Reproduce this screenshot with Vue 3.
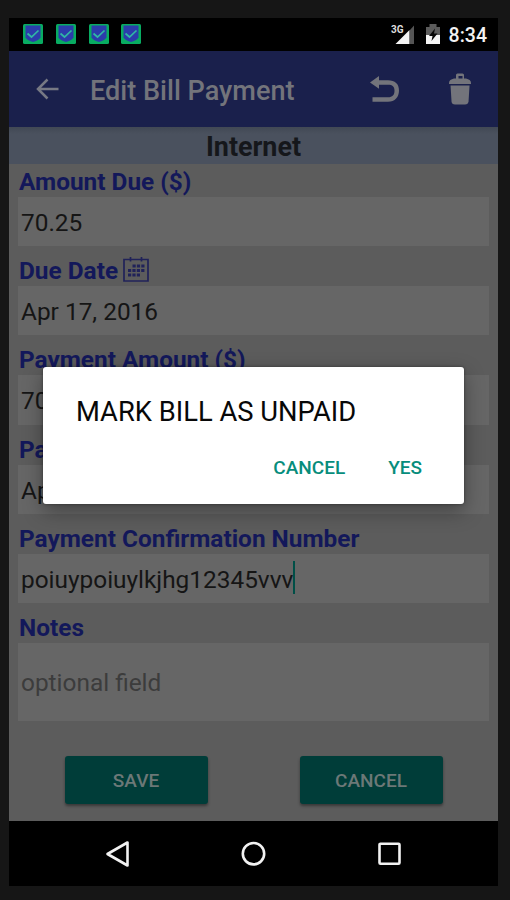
<script setup>
const badges = [1, 2, 3, 4]
const fields = [
  { label: 'Amount Due ($)', value: '70.25' },
  { label: 'Due Date', value: 'Apr 17, 2016', calendar: true },
  { label: 'Payment Amount ($)', value: '70.25' },
  { label: 'Payment Date', value: 'Apr 17, 2016' },
  { label: 'Payment Confirmation Number', value: 'poiuypoiuylkjhg12345vvv', focused: true },
  { label: 'Notes', value: 'optional field', notes: true }
]
</script>

<template>
  <div class="frame">
    <div class="screen">
      <header class="status">
        <div class="badges">
          <svg v-for="b in badges" :key="b" width="20" height="20" viewBox="0 0 20 20">
            <rect width="20" height="20" rx="1.5" fill="#08ac62" />
            <path d="M2.500 1.500h15v12c-1 2.300-4.500 3.500-7.500 4.500c-3-1-6.500-2.200-7.500-4.500z" fill="#2b3cab" />
            <path d="M4.500 9.500l4 3.500l7-6.500" fill="none" stroke="#30b8a4" stroke-width="1.700" />
          </svg>
        </div>
        <div class="system">
          <svg class="signal" width="24" height="21" viewBox="0 0 24 21">
            <text x="0" y="9" class="net">3G</text>
            <path d="M23 1.500v18.500h-4v-14z" fill="#555" />
            <path d="M4.500 20L18.500 6v14z" fill="#f4f4f4" />
          </svg>
          <svg class="battery" width="16" height="21" viewBox="0 0 16 21">
            <path d="M1 3h3.500V0h7v3H15v9H1z" fill="#5c5c5c" />
            <path d="M1 11h14v9H1z" fill="#f4f4f4" />
            <path d="M10 4.500L4 12h3.500L6.500 17L12.500 9.500H9z" fill="#060606" />
          </svg>
          <span class="clock">8:34</span>
        </div>
      </header>

      <nav class="toolbar">
        <svg class="back" width="24" height="22" viewBox="0 0 24 22">
          <path d="M22.500 11H2.500M11.500 1.500L2 11l9.500 9.500" fill="none" stroke="#777984" stroke-width="2.500" />
        </svg>
        <h1>Edit Bill Payment</h1>
        <svg class="undo" width="30" height="28" viewBox="0 0 30 28">
          <path d="M0 6.500L9 0v4.300h9C25 4.300 29 8 29 14.500S25 25.800 18 25.800H2.500v-4.500H18c4.500 0 6.500-2.300 6.500-6.500s-2-6-6.500-6H9v4z" fill="#73747b" />
        </svg>
        <svg class="trash" width="24" height="32" viewBox="0 0 24 32">
          <path d="M1 10C1 7.500 3 6.200 6 5.500h2V2q0-1.500 1.500-1.500h5Q16 .5 16 2v3.500h2c3 .7 5 2 5 4.500v1H1zM10.500 3v2.500h4V3z" fill="#73747b" fill-rule="evenodd" />
          <path d="M2.500 12.500h19l-1 16q-.3 3-3.500 3H7q-3.200 0-3.500-3z" fill="#73747b" />
        </svg>
      </nav>

      <div class="payee">Internet</div>

      <main class="form">
        <section v-for="f in fields" :key="f.label" class="group">
          <div class="label">
            <span>{{ f.label }}</span>
            <svg v-if="f.calendar" class="calendar" width="26" height="25" viewBox="0 0 26 25">
              <path d="M1 2.500h24v21.500H1zM7.500 0v4.500M18.500 0v4.500" fill="none" stroke="#202259" stroke-width="1.700" />
              <path d="M9.500 9h12M5 13.500h16.500M5 18h12" fill="none" stroke="#202259" stroke-width="3" stroke-dasharray="3.200 1.200" />
            </svg>
          </div>
          <div class="field" :class="{ notes: f.notes }">
            <span>{{ f.value }}</span><i v-if="f.focused" class="caret"></i>
          </div>
        </section>
        <div class="actions">
          <button>SAVE</button>
          <button>CANCEL</button>
        </div>
      </main>

      <footer class="navbar">
        <svg width="28" height="28" viewBox="0 0 28 28"><path d="M3.500 14L23.500 2.500v23z" /></svg>
        <svg width="28" height="28" viewBox="0 0 28 28"><circle cx="13.500" cy="13.700" r="10.700" /></svg>
        <svg width="28" height="28" viewBox="0 0 28 28"><rect x="3.500" y="3.700" width="20" height="20" rx="1" /></svg>
      </footer>

      <div class="dialog" role="dialog">
        <h2>MARK BILL AS UNPAID</h2>
        <div class="choices">
          <a>CANCEL</a>
          <a>YES</a>
        </div>
      </div>
    </div>
  </div>
</template>

<style>
body { margin: 0; background: #161616; }
</style>

<style scoped>
* { box-sizing: border-box; }
.frame { height: 900px; padding: 18px 12px 14px 9px; background: #161616; font-family: Roboto, sans-serif; overflow: hidden; }
.screen { position: relative; width: 489px; height: 868px; display: flex; flex-direction: column; background: #5c5c5c; }
.status { height: 33px; flex: none; background: #000; display: flex; justify-content: space-between; padding: 6px 11px 0 14px; }
.badges { display: flex; gap: 12.800px; }
.badges svg { display: block; }
.system { display: flex; align-items: flex-start; }
.net { font: 700 10px Roboto, sans-serif; fill: #ddd; }
.battery { margin: 0 8px 0 10px; }
.clock { font-size: 19.500px; line-height: 23px; font-weight: 500; color: #f2f2f2; }
.toolbar { height: 76px; flex: none; background: #1a204c; display: flex; align-items: center; padding: 0 26px 0 27px; }
.toolbar h1 { margin: 3px auto 0 30px; font-size: 27.100px; font-weight: 500; line-height: 32px; color: #73747b; white-space: nowrap; }
.undo { margin: 2px 48px 0 0; }
.payee { height: 37px; flex: none; background: linear-gradient(#414854, #4a515e 7px); text-align: center; font-size: 26.900px; line-height: 40px; font-weight: 700; color: #15171b; }
.form { flex: 1; padding: 0 9px; }
.group + .group { padding-top: 7px; }
.label { height: 33px; display: flex; align-items: center; gap: 5px; padding: 2px 0 0 1px; font-size: 24.400px; line-height: 29px; font-weight: 700; color: #13185a; white-space: nowrap; }
.calendar { margin-top: -3px; }
.field { height: 49.200px; display: flex; align-items: center; padding: 2px 0 0 3px; background: #666; color: #151515; font-size: 24.400px; line-height: 29px; white-space: nowrap; }
.field.notes { height: 78px; color: #3c3c3c; padding-top: 1px; }
.caret { width: 2px; height: 33px; background: #004f47; margin-top: -3px; }
.actions { display: flex; justify-content: space-between; padding: 35px 46px 0 47px; }
.actions button { width: 143px; height: 48px; border: 0; border-radius: 3px; background: #003d39; color: #6c7877; font: 500 19px Roboto, sans-serif; box-shadow: 0 2px 3px rgba(0, 0, 0, .4); padding: 2px 1px 0 0; }
.navbar { height: 65px; flex: none; background: #000; display: flex; justify-content: center; gap: 108px; align-items: center; }
.navbar svg { fill: none; stroke: #f2f2f2; stroke-width: 2.600; stroke-linejoin: round; }
.dialog { position: absolute; left: 34px; top: 349px; width: 421px; height: 137px; border-radius: 3px; background: #fff; box-shadow: 0 7px 20px rgba(0, 0, 0, .36), 0 0 3px rgba(0, 0, 0, .4); padding: 29px 42px 0 33px; }
.dialog h2 { margin: 0; font-size: 27.350px; font-weight: 400; line-height: 32px; color: #080808; white-space: nowrap; }
.choices { display: flex; justify-content: flex-end; gap: 43px; margin-top: 28px; font-size: 19px; line-height: 24px; font-weight: 500; color: #078d7c; }
</style>
